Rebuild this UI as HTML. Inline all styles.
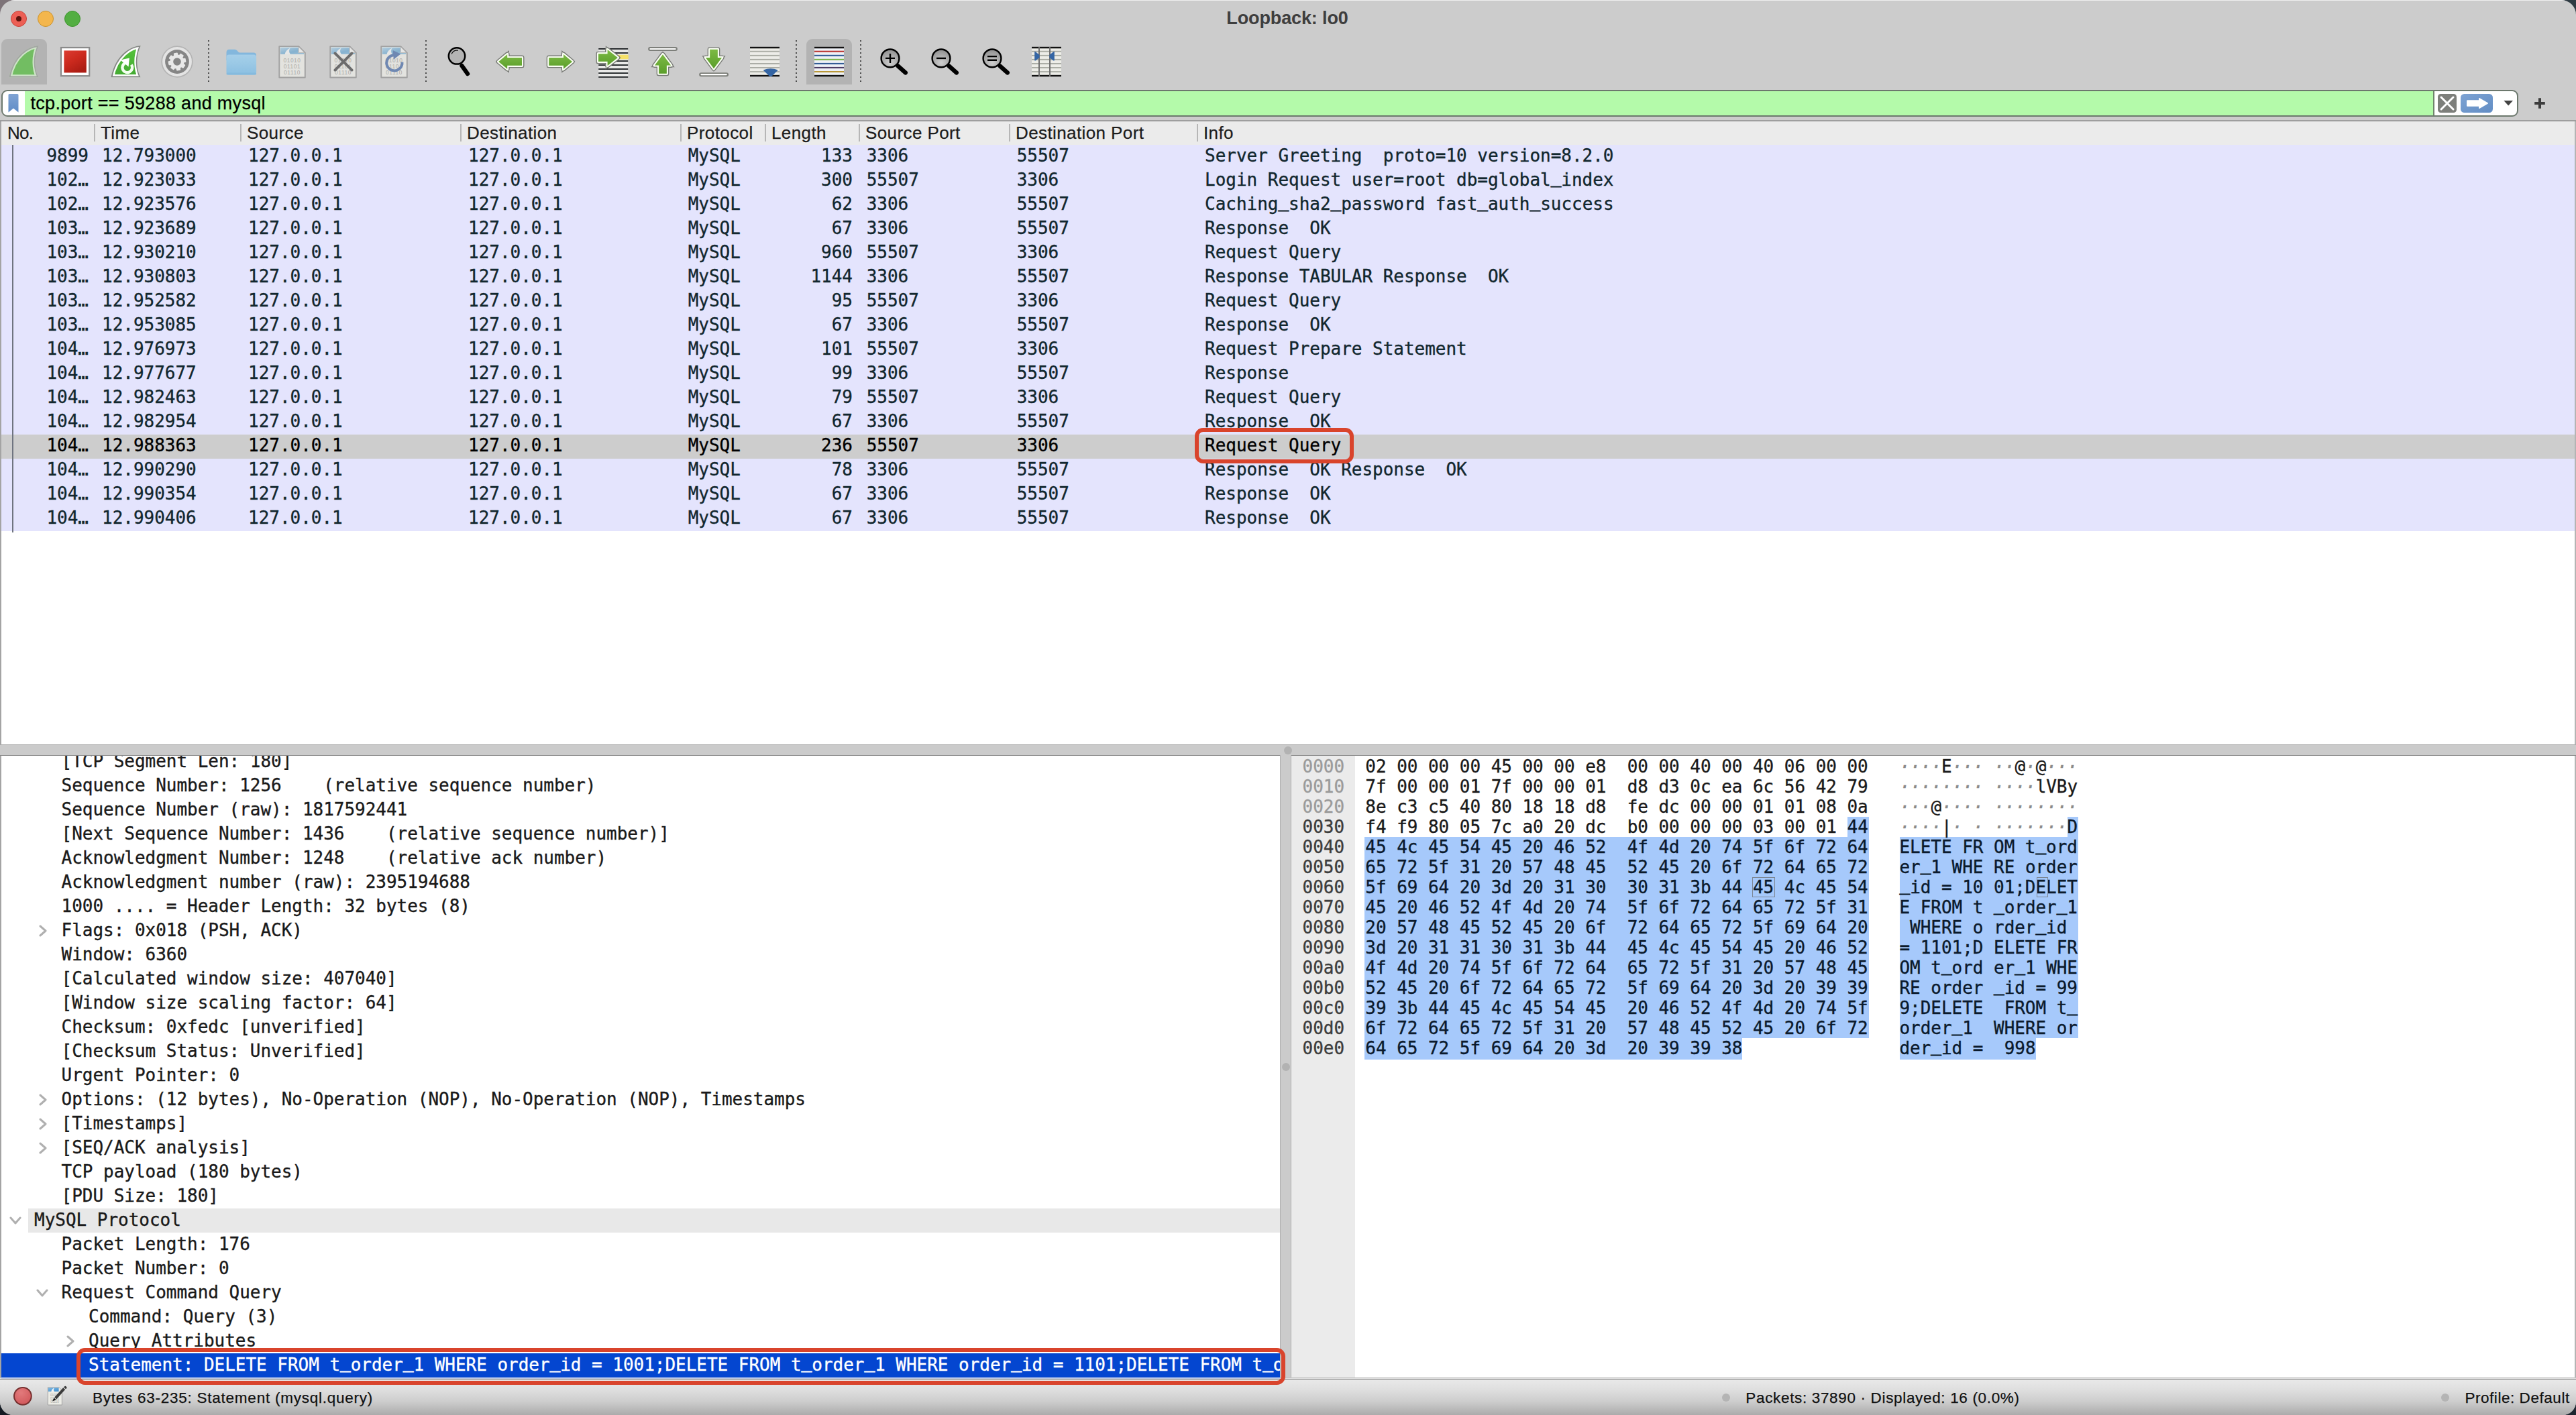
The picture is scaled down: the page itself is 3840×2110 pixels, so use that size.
<!DOCTYPE html><html lang="en"><head><meta charset="utf-8"><title>Loopback: lo0</title><style>
*{box-sizing:border-box;margin:0;padding:0}
html,body{width:3840px;height:2110px;overflow:hidden}
body{background:#2e3a42;font-family:"Liberation Sans",sans-serif;position:relative}
#dl{position:absolute;left:0;top:0;width:60px;height:60px;background:#7d7378}
#dbl{position:absolute;left:0;top:2050px;width:60px;height:60px;background:#141a22}
#dbr{position:absolute;left:3780px;top:2050px;width:60px;height:60px;background:#1e2630}
#win{position:absolute;left:0;top:0;width:3840px;height:2110px;background:#cccccc;border-radius:22px 22px 20px 20px;overflow:hidden}
#topline{position:absolute;left:0;top:0;width:3840px;height:1.3px;background:#efefef}
.abs{position:absolute}
#title{position:absolute;left:-1px;width:3840px;top:10px;height:34px;line-height:34px;text-align:center;font-weight:bold;font-size:27px;letter-spacing:-0.13px;color:#3e3e3e}
.tl{position:absolute;top:16px;width:24px;height:24px;border-radius:50%}
.tbb{position:absolute;top:58px;width:68px;height:67.6px;border-radius:9px 9px 0 0;background:#b3b3b3}
.sep{position:absolute;top:60px;width:2px;height:62px;background:repeating-linear-gradient(to bottom,#4a4a4a 0,#4a4a4a 2px,transparent 2px,transparent 6px)}
#filter{position:absolute;left:2px;top:134px;width:3752px;height:40px;border:2px solid #6c786d;border-radius:9px;background:#fff;overflow:hidden}
#fgreen{position:absolute;left:33px;top:0;width:3590px;height:36px;background:#b4faaa}
#ftext{position:absolute;left:41.5px;top:0;height:36px;line-height:37px;font-size:27px;letter-spacing:0.3px;color:#000;white-space:pre}
#hdr{position:absolute;left:2px;top:181px;width:3836px;height:35px;background:#ebebeb}
.hc,.st,#ftext{-webkit-text-stroke:0.25px currentColor}
.hc{position:absolute;top:0;height:35px;line-height:34px;font-size:26px;letter-spacing:0.4px;color:#1c1c1c;white-space:pre}
.hs{position:absolute;top:4px;width:2px;height:26px;background:#b6b6b6}
#plist{position:absolute;left:2px;top:216px;width:3836px;height:894px;background:#fff;overflow:hidden}
.pr,.dr,.hx{-webkit-text-stroke:0.35px currentColor}
.pr{letter-spacing:-0.028px;position:absolute;left:0;width:3836px;height:36px;background:#e4e4fd;font-family:"DejaVu Sans Mono","Liberation Mono",monospace;font-size:26px;line-height:36px;color:#12272e;white-space:pre}
.pr.sel{background:#cdcdcd;color:#000}
.pr span{position:absolute;top:-2.3px;height:36px}
.r{text-align:right}
#det{position:absolute;left:2px;top:1127px;width:1906px;height:928px;background:#fff;overflow:hidden}
.dr{letter-spacing:-0.028px;position:absolute;left:0;width:1906px;height:36px;font-family:"DejaVu Sans Mono","Liberation Mono",monospace;font-size:26px;line-height:36px;color:#1a1a1a;white-space:pre}
.dr span{position:absolute;top:-1px}
.dr.sel{background:#0446d0;color:#fff}
.chev{position:absolute}
u{text-decoration:none;position:relative;top:-3.6px;-webkit-text-stroke:0.9px currentColor}
#hex{position:absolute;left:1925px;top:1127px;width:1913px;height:928px;background:#fff;overflow:hidden}
#hexoff{position:absolute;left:0;top:0;width:95px;height:928px;background:#ebebeb}
.hx{position:absolute;height:30px;line-height:30px;font-family:"DejaVu Sans Mono","Liberation Mono",monospace;font-size:26px;color:#1a1a1a;white-space:pre}
.hx span{position:relative;top:-0.5px;letter-spacing:-0.04px}
.hl{position:absolute;background:#a6c9fb}
.dot{color:#8a8a8a}
#status{position:absolute;left:0;top:2057px;width:3840px;height:53px;background:linear-gradient(to bottom,#e9e9e9 0,#dedede 30%,#cdcdcd 62%,#ababab 100%)}
.st{position:absolute;top:0;height:53px;line-height:55px;font-size:22.5px;letter-spacing:0.75px;color:#111;white-space:pre}
.ann{position:absolute;border:6px solid #d9442c;border-radius:12.5px}
</style></head><body>
<div id="dl"></div><div id="dbl"></div><div id="dbr"></div>
<div id="win">
<div id="topline"></div>
<div class="tl" style="left:16px;background:#ec5f55;border:1px solid #c9443b"></div>
<div class="abs" style="left:24px;top:24px;width:8px;height:8px;border-radius:50%;background:#5c140d"></div>
<div class="tl" style="left:56px;background:#f3b64d;border:1px solid #c9922f"></div>
<div class="tl" style="left:96px;background:#53ae42;border:1px solid #3f9430"></div>
<div id="title">Loopback: lo0</div>
<div class="tbb" style="left:2px"></div>
<div class="tbb" style="left:1202px"></div>
<div class="sep" style="left:310px"></div>
<div class="sep" style="left:634px"></div>
<div class="sep" style="left:1186px"></div>
<div class="sep" style="left:1282px"></div>
<svg class="abs" style="left:0;top:56px" width="1600" height="72" viewBox="0 56 1600 72"><defs><linearGradient id="ggreen" x1="0" y1="0" x2="0" y2="1"><stop offset="0" stop-color="#7dba45"/><stop offset="1" stop-color="#5a9e2a"/></linearGradient><linearGradient id="gred" x1="0" y1="0" x2="0.6" y2="1"><stop offset="0" stop-color="#dc3c32"/><stop offset="0.5" stop-color="#cc2a1e"/><stop offset="1" stop-color="#ac1d14"/></linearGradient><linearGradient id="gband" x1="0" y1="0" x2="1" y2="1"><stop offset="0" stop-color="#a8cfe8"/><stop offset="0.6" stop-color="#62a5d2"/><stop offset="1" stop-color="#7db6dc"/></linearGradient><linearGradient id="gfold" x1="0" y1="0" x2="0" y2="1"><stop offset="0" stop-color="#a3d0ec"/><stop offset="1" stop-color="#86bfe4"/></linearGradient><radialGradient id="gmag" cx="0.5" cy="0.75" r="0.8"><stop offset="0" stop-color="#cfcfcf"/><stop offset="1" stop-color="#8a8a8a"/></radialGradient><linearGradient id="gfin2" x1="0" y1="0" x2="0" y2="1"><stop offset="0" stop-color="#55c43c"/><stop offset="1" stop-color="#43a832"/></linearGradient></defs><clipPath id="finclip1"><path d="M57.90 68.10 C43.00 68.50,20.00 82.00,13.50 115.30 L57.60 115.30 C51.50 104.00,50.00 84.00,57.90 68.10 Z"/></clipPath><g clip-path="url(#finclip1)"><path d="M57.90 68.10 C43.00 68.50,20.00 82.00,13.50 115.30 L57.60 115.30 C51.50 104.00,50.00 84.00,57.90 68.10 Z" fill="#72bd62"/><path d="M57.90 68.10 C43.00 68.50,20.00 82.00,13.50 115.30 L57.60 115.30 C51.50 104.00,50.00 84.00,57.90 68.10 Z" fill="none" stroke="#cde4c7" stroke-width="8.0"/><path d="M57.90 68.10 C43.00 68.50,20.00 82.00,13.50 115.30 L57.60 115.30 C51.50 104.00,50.00 84.00,57.90 68.10 Z" fill="none" stroke="#a3a4a3" stroke-width="3.6"/></g><rect x="91" y="71" width="42.2" height="42.2" fill="#fff" stroke="#8a8a8a" stroke-width="2.2"/><rect x="95.4" y="75.4" width="33.4" height="33" fill="url(#gred)"/><clipPath id="finclip2"><path d="M209.90 68.10 C195.00 68.50,172.00 82.00,165.50 115.30 L209.60 115.30 C203.50 104.00,202.00 84.00,209.90 68.10 Z"/></clipPath><g clip-path="url(#finclip2)"><path d="M209.90 68.10 C195.00 68.50,172.00 82.00,165.50 115.30 L209.60 115.30 C203.50 104.00,202.00 84.00,209.90 68.10 Z" fill="url(#gfin2)"/><path d="M209.90 68.10 C195.00 68.50,172.00 82.00,165.50 115.30 L209.60 115.30 C203.50 104.00,202.00 84.00,209.90 68.10 Z" fill="none" stroke="#ffffff" stroke-width="8.4"/><path d="M209.90 68.10 C195.00 68.50,172.00 82.00,165.50 115.30 L209.60 115.30 C203.50 104.00,202.00 84.00,209.90 68.10 Z" fill="none" stroke="#858685" stroke-width="3.4"/></g><path d="M195.86 96.46 A7.4 7.4 0 1 1 187.27 93.74" fill="none" stroke="#f4fff0" stroke-width="4.4"/><path d="M179.4 89.4 L192.9 86.6 L191.6 99.6 Z" fill="#fff"/><circle cx="264" cy="92" r="22.8" fill="#e4e4e4" stroke="#b4b4b4" stroke-width="1.7"/><circle cx="264" cy="92" r="17.9" fill="#858585"/><path d="M259.87 80.31 L263.88 79.60 L264.66 82.42 L267.45 83.04 L269.35 80.81 L272.68 83.15 L271.24 85.70 L272.77 88.10 L275.69 87.87 L276.40 91.88 L273.58 92.66 L272.96 95.45 L275.19 97.35 L272.85 100.68 L270.30 99.24 L267.90 100.77 L268.13 103.69 L264.12 104.40 L263.34 101.58 L260.55 100.96 L258.65 103.19 L255.32 100.85 L256.76 98.30 L255.23 95.90 L252.31 96.13 L251.60 92.12 L254.42 91.34 L255.04 88.55 L252.81 86.65 L255.15 83.32 L257.70 84.76 L260.10 83.23 Z M257.2 92 a6.8 6.8 0 1 0 13.6 0 a6.8 6.8 0 1 0 -13.6 0 Z" fill="#e8e8e8" fill-rule="evenodd" stroke="#e8e8e8" stroke-width="2" stroke-linejoin="round"/><g opacity="0.92"><path d="M337.5 78.5 Q337.5 73.8 341.5 73.8 L350 73.8 Q352 73.8 353.6 75.6 L355 77.2 Q356.2 78.4 358 78.4 L378 78.4 Q382 78.4 382 82.4 L382 90 L337.5 90 Z" fill="#7db6df"/><rect x="337.5" y="81.6" width="44.6" height="30" rx="4" fill="url(#gfold)"/><rect x="337.5" y="108.6" width="44.6" height="3" rx="1.5" fill="#7fb9e0"/></g><g opacity="0.66"><path d="M416.3 69.1 H445.3 L454.8 78.6 V115.5 H416.3 Z" fill="#efefe9" stroke="#8c8c8c" stroke-width="1.9" stroke-linejoin="round"/><path d="M417.90000000000003 70.69999999999999 H444.7 V79.0 H453.2 V80.69999999999999 H417.90000000000003 Z" fill="url(#gband)"/><path d="M445.3 69.89999999999999 V78.6 H454.0 Z" fill="#f6f6f4" stroke="#9a9a9a" stroke-width="0.8"/><path d="M433.3 71.3 C427.8 73.6,425.1 77.6,424.7 81.1 L433.3 81.1 C430.3 78.1,430.3 74.1,433.3 71.3 Z" fill="#f4f6f6"/><text x="435.5" y="93.0" font-family="Liberation Sans,sans-serif" font-size="8.4" letter-spacing="0.55" text-anchor="middle" fill="#9a9a96">01010</text><text x="435.5" y="101.9" font-family="Liberation Sans,sans-serif" font-size="8.4" letter-spacing="0.55" text-anchor="middle" fill="#9a9a96">01101</text><text x="435.5" y="110.8" font-family="Liberation Sans,sans-serif" font-size="8.4" letter-spacing="0.55" text-anchor="middle" fill="#9a9a96">01110</text></g><g opacity="0.66"><path d="M492.3 69.1 H521.3 L530.8 78.6 V115.5 H492.3 Z" fill="#efefe9" stroke="#8c8c8c" stroke-width="1.9" stroke-linejoin="round"/><path d="M493.90000000000003 70.69999999999999 H520.6999999999999 V79.0 H529.1999999999999 V80.69999999999999 H493.90000000000003 Z" fill="url(#gband)"/><path d="M521.3 69.89999999999999 V78.6 H530.0 Z" fill="#f6f6f4" stroke="#9a9a9a" stroke-width="0.8"/><path d="M509.3 71.3 C503.8 73.6,501.1 77.6,500.7 81.1 L509.3 81.1 C506.3 78.1,506.3 74.1,509.3 71.3 Z" fill="#f4f6f6"/><text x="511.5" y="93.0" font-family="Liberation Sans,sans-serif" font-size="8.4" letter-spacing="0.55" text-anchor="middle" fill="#9a9a96">01010</text><text x="511.5" y="101.9" font-family="Liberation Sans,sans-serif" font-size="8.4" letter-spacing="0.55" text-anchor="middle" fill="#9a9a96">01101</text><text x="511.5" y="110.8" font-family="Liberation Sans,sans-serif" font-size="8.4" letter-spacing="0.55" text-anchor="middle" fill="#9a9a96">01110</text></g><path d="M499.5 79.5 L524.5 104.5 M524.5 79.5 L499.5 104.5" stroke="#6c6c6c" stroke-width="4" stroke-linecap="round"/><g opacity="0.66"><path d="M568.3 69.1 H597.3 L606.8 78.6 V115.5 H568.3 Z" fill="#efefe9" stroke="#8c8c8c" stroke-width="1.9" stroke-linejoin="round"/><path d="M569.9 70.69999999999999 H596.6999999999999 V79.0 H605.1999999999999 V80.69999999999999 H569.9 Z" fill="url(#gband)"/><path d="M597.3 69.89999999999999 V78.6 H606.0 Z" fill="#f6f6f4" stroke="#9a9a9a" stroke-width="0.8"/><path d="M585.3 71.3 C579.8 73.6,577.0999999999999 77.6,576.6999999999999 81.1 L585.3 81.1 C582.3 78.1,582.3 74.1,585.3 71.3 Z" fill="#f4f6f6"/><text x="587.5" y="93.0" font-family="Liberation Sans,sans-serif" font-size="8.4" letter-spacing="0.55" text-anchor="middle" fill="#9a9a96">01010</text><text x="587.5" y="101.9" font-family="Liberation Sans,sans-serif" font-size="8.4" letter-spacing="0.55" text-anchor="middle" fill="#9a9a96">01101</text><text x="587.5" y="110.8" font-family="Liberation Sans,sans-serif" font-size="8.4" letter-spacing="0.55" text-anchor="middle" fill="#9a9a96">01110</text></g><path d="M592.6 83.2 A11.6 11.6 0 1 0 599.4 92.6" fill="none" stroke="#6f88b2" stroke-width="4"/><path d="M585.6 75 L597.4 80.4 L586.8 88.6 Z" fill="#6f88b2"/><path d="M688.5 98 L697 110" stroke="#000" stroke-width="6.4" stroke-linecap="round"/><circle cx="681" cy="83.4" r="12.2" fill="#b4b4b4" stroke="#000" stroke-width="2.5"/><path d="M673.4 80 A8.6 8.6 0 0 1 682.4 75.2" fill="none" stroke="#111" stroke-width="1.3" stroke-linecap="round"/><path d="M778.00 86.00 L756.20 86.00 L756.20 81.05 L743.20 91.90 L756.20 102.75 L756.20 97.80 L778.00 97.80 Z" fill="#777975" stroke="#777975" stroke-width="5.6" stroke-linejoin="miter" stroke-miterlimit="3"/><path d="M778.00 86.00 L756.20 86.00 L756.20 81.05 L743.20 91.90 L756.20 102.75 L756.20 97.80 L778.00 97.80 Z" fill="#777975" stroke="#777975" stroke-width="7" stroke-linejoin="round"/><path d="M778.00 86.00 L756.20 86.00 L756.20 81.05 L743.20 91.90 L756.20 102.75 L756.20 97.80 L778.00 97.80 Z" fill="#fff" stroke="#fbfff4" stroke-width="3.2" stroke-linejoin="miter" stroke-miterlimit="3"/><path d="M778.00 86.00 L756.20 86.00 L756.20 81.05 L743.20 91.90 L756.20 102.75 L756.20 97.80 L778.00 97.80 Z" fill="#fff" stroke="#fbfff4" stroke-width="4.2" stroke-linejoin="round"/><path d="M778.00 86.00 L756.20 86.00 L756.20 81.05 L743.20 91.90 L756.20 102.75 L756.20 97.80 L778.00 97.80 Z" fill="url(#ggreen)"/><path d="M818.20 86.00 L840.00 86.00 L840.00 81.05 L853.00 91.90 L840.00 102.75 L840.00 97.80 L818.20 97.80 Z" fill="#777975" stroke="#777975" stroke-width="5.6" stroke-linejoin="miter" stroke-miterlimit="3"/><path d="M818.20 86.00 L840.00 86.00 L840.00 81.05 L853.00 91.90 L840.00 102.75 L840.00 97.80 L818.20 97.80 Z" fill="#777975" stroke="#777975" stroke-width="7" stroke-linejoin="round"/><path d="M818.20 86.00 L840.00 86.00 L840.00 81.05 L853.00 91.90 L840.00 102.75 L840.00 97.80 L818.20 97.80 Z" fill="#fff" stroke="#fbfff4" stroke-width="3.2" stroke-linejoin="miter" stroke-miterlimit="3"/><path d="M818.20 86.00 L840.00 86.00 L840.00 81.05 L853.00 91.90 L840.00 102.75 L840.00 97.80 L818.20 97.80 Z" fill="#fff" stroke="#fbfff4" stroke-width="4.2" stroke-linejoin="round"/><path d="M818.20 86.00 L840.00 86.00 L840.00 81.05 L853.00 91.90 L840.00 102.75 L840.00 97.80 L818.20 97.80 Z" fill="url(#ggreen)"/><rect x="892.2" y="72.2" width="44" height="43.4" fill="#e9e9e8"/><rect x="892.2" y="72.05" width="44.0" height="1.7" fill="#0e1214"/><rect x="892.2" y="78.15" width="44.0" height="1.7" fill="#0e1214"/><rect x="892.2" y="84.15" width="44.0" height="1.7" fill="#0e1214"/><rect x="892.2" y="90.15" width="44.0" height="1.7" fill="#0e1214"/><rect x="892.2" y="96.15" width="44.0" height="1.7" fill="#0e1214"/><rect x="892.2" y="102.15" width="44.0" height="1.7" fill="#0e1214"/><rect x="892.2" y="108.15" width="44.0" height="1.7" fill="#0e1214"/><rect x="892.2" y="114.05" width="44.0" height="1.7" fill="#0e1214"/><rect x="915" y="81.7" width="21.8" height="6.6" fill="#f6e168"/><path d="M892.00 80.15 L905.60 80.15 L905.60 74.10 L920.80 86.00 L905.60 97.90 L905.60 91.85 L892.00 91.85 Z" fill="#777975" stroke="#777975" stroke-width="5.6" stroke-linejoin="miter" stroke-miterlimit="3"/><path d="M892.00 80.15 L905.60 80.15 L905.60 74.10 L920.80 86.00 L905.60 97.90 L905.60 91.85 L892.00 91.85 Z" fill="#777975" stroke="#777975" stroke-width="7" stroke-linejoin="round"/><path d="M892.00 80.15 L905.60 80.15 L905.60 74.10 L920.80 86.00 L905.60 97.90 L905.60 91.85 L892.00 91.85 Z" fill="#fff" stroke="#fbfff4" stroke-width="3.2" stroke-linejoin="miter" stroke-miterlimit="3"/><path d="M892.00 80.15 L905.60 80.15 L905.60 74.10 L920.80 86.00 L905.60 97.90 L905.60 91.85 L892.00 91.85 Z" fill="#fff" stroke="#fbfff4" stroke-width="4.2" stroke-linejoin="round"/><path d="M892.00 80.15 L905.60 80.15 L905.60 74.10 L920.80 86.00 L905.60 97.90 L905.60 91.85 L892.00 91.85 Z" fill="url(#ggreen)"/><rect x="966.1" y="70" width="43.8" height="6" rx="3" fill="#7d7f7a"/><rect x="968.3" y="71.9" width="39.4" height="2.2" rx="1.1" fill="#fff"/><path d="M982.15 109.70 L993.85 109.70 L993.85 97.50 L1000.10 97.50 L988.00 81.20 L975.90 97.50 L982.15 97.50 Z" fill="#777975" stroke="#777975" stroke-width="5.6" stroke-linejoin="miter" stroke-miterlimit="3"/><path d="M982.15 109.70 L993.85 109.70 L993.85 97.50 L1000.10 97.50 L988.00 81.20 L975.90 97.50 L982.15 97.50 Z" fill="#777975" stroke="#777975" stroke-width="7" stroke-linejoin="round"/><path d="M982.15 109.70 L993.85 109.70 L993.85 97.50 L1000.10 97.50 L988.00 81.20 L975.90 97.50 L982.15 97.50 Z" fill="#fff" stroke="#fbfff4" stroke-width="3.2" stroke-linejoin="miter" stroke-miterlimit="3"/><path d="M982.15 109.70 L993.85 109.70 L993.85 97.50 L1000.10 97.50 L988.00 81.20 L975.90 97.50 L982.15 97.50 Z" fill="#fff" stroke="#fbfff4" stroke-width="4.2" stroke-linejoin="round"/><path d="M982.15 109.70 L993.85 109.70 L993.85 97.50 L1000.10 97.50 L988.00 81.20 L975.90 97.50 L982.15 97.50 Z" fill="url(#ggreen)"/><path d="M1058.15 73.70 L1069.85 73.70 L1069.85 85.90 L1076.10 85.90 L1064.00 102.20 L1051.90 85.90 L1058.15 85.90 Z" fill="#777975" stroke="#777975" stroke-width="5.6" stroke-linejoin="miter" stroke-miterlimit="3"/><path d="M1058.15 73.70 L1069.85 73.70 L1069.85 85.90 L1076.10 85.90 L1064.00 102.20 L1051.90 85.90 L1058.15 85.90 Z" fill="#777975" stroke="#777975" stroke-width="7" stroke-linejoin="round"/><path d="M1058.15 73.70 L1069.85 73.70 L1069.85 85.90 L1076.10 85.90 L1064.00 102.20 L1051.90 85.90 L1058.15 85.90 Z" fill="#fff" stroke="#fbfff4" stroke-width="3.2" stroke-linejoin="miter" stroke-miterlimit="3"/><path d="M1058.15 73.70 L1069.85 73.70 L1069.85 85.90 L1076.10 85.90 L1064.00 102.20 L1051.90 85.90 L1058.15 85.90 Z" fill="#fff" stroke="#fbfff4" stroke-width="4.2" stroke-linejoin="round"/><path d="M1058.15 73.70 L1069.85 73.70 L1069.85 85.90 L1076.10 85.90 L1064.00 102.20 L1051.90 85.90 L1058.15 85.90 Z" fill="url(#ggreen)"/><rect x="1042.2" y="108.2" width="43.8" height="6" rx="3" fill="#7d7f7a"/><rect x="1044.4" y="110.1" width="39.4" height="2.2" rx="1.1" fill="#fff"/><rect x="1118" y="70" width="44" height="44" fill="#edede8"/><rect x="1118" y="75.80" width="44" height="1.8" fill="#a9aba3"/><rect x="1118" y="81.90" width="44" height="1.8" fill="#a9aba3"/><rect x="1118" y="87.90" width="44" height="1.8" fill="#a9aba3"/><rect x="1118" y="94.00" width="44" height="1.8" fill="#a9aba3"/><rect x="1118" y="100.00" width="44" height="1.8" fill="#a9aba3"/><rect x="1118" y="106.10" width="44" height="1.8" fill="#a9aba3"/><rect x="1118" y="69.80" width="44" height="2.4" fill="#111"/><rect x="1118" y="111.80" width="44" height="2.4" fill="#111"/><path d="M1137.6 104.6 Q1148.7 100 1159.8 104.6 L1150.6 113.6 Q1148.7 114.6 1146.8 113.6 Z" fill="#3465a4"/><rect x="1214" y="70" width="44" height="44" fill="#eef1f6"/><rect x="1214" y="69.80" width="44" height="2.4" fill="#111"/><rect x="1214" y="111.80" width="44" height="2.4" fill="#111"/><rect x="1214" y="75.70" width="44" height="2.0" fill="#b9302c"/><rect x="1214" y="81.80" width="44" height="2.0" fill="#2f5a94"/><rect x="1214" y="87.80" width="44" height="2.0" fill="#7ab446"/><rect x="1214" y="93.90" width="44" height="2.0" fill="#2f5a94"/><rect x="1214" y="99.90" width="44" height="2.0" fill="#4a3a62"/><rect x="1214" y="106.00" width="44" height="2.0" fill="#b99838"/><path d="M1338.6 98.4 L1349.8 108.4" stroke="#000" stroke-width="6.4" stroke-linecap="round"/><circle cx="1327" cy="86.9" r="13.4" fill="url(#gmag)" stroke="#000" stroke-width="2.4"/><path d="M1320 86.9 H1334 M1327 79.9 V93.9" stroke="#000" stroke-width="2.4"/><path d="M1414.6 98.4 L1425.8 108.4" stroke="#000" stroke-width="6.4" stroke-linecap="round"/><circle cx="1403" cy="86.9" r="13.4" fill="url(#gmag)" stroke="#000" stroke-width="2.4"/><path d="M1396 86.9 H1410" stroke="#000" stroke-width="2.4"/><path d="M1490.6 98.4 L1501.8 108.4" stroke="#000" stroke-width="6.4" stroke-linecap="round"/><circle cx="1479" cy="86.9" r="13.4" fill="url(#gmag)" stroke="#000" stroke-width="2.4"/><path d="M1472 84.10000000000001 H1486 M1472 89.7 H1486" stroke="#000" stroke-width="2.4"/><rect x="1538" y="70" width="44" height="44" fill="#edede8"/><rect x="1538" y="75.80" width="44" height="1.8" fill="#a9aba3"/><rect x="1538" y="81.90" width="44" height="1.8" fill="#a9aba3"/><rect x="1538" y="87.90" width="44" height="1.8" fill="#a9aba3"/><rect x="1538" y="94.00" width="44" height="1.8" fill="#a9aba3"/><rect x="1538" y="100.00" width="44" height="1.8" fill="#a9aba3"/><rect x="1538" y="106.10" width="44" height="1.8" fill="#a9aba3"/><rect x="1538" y="69.80" width="44" height="2.4" fill="#111"/><rect x="1538" y="111.80" width="44" height="2.4" fill="#111"/><rect x="1548" y="70" width="2" height="44" fill="#6f6f6f"/><rect x="1564" y="70" width="2" height="44" fill="#6f6f6f"/><path d="M1542.2 77.6 Q1542.2 76.4 1543.4 77 L1549.6 82 L1549.6 86 L1543.4 90.4 Q1542.2 91 1542.2 89.8 Z" fill="#3465a4"/><path d="M1571.8 77.6 Q1571.8 76.4 1570.6 77 L1564.4 82 L1564.4 86 L1570.6 90.4 Q1571.8 91 1571.8 89.8 Z" fill="#3465a4"/></svg>
<div id="filter"><div id="fgreen"></div>
<svg class="abs" style="left:7px;top:3px" width="18" height="30" viewBox="0 0 18 30"><defs><linearGradient id="bk" x1="0" y1="0" x2="0" y2="1"><stop offset="0" stop-color="#7fa3d3"/><stop offset="1" stop-color="#5f8cc7"/></linearGradient></defs><path d="M1.5 2.5 Q1.5 1 3 1 L15 1 Q16.5 1 16.5 2.5 L16.5 28.5 L9 22.5 L1.5 28.5 Z" fill="url(#bk)"/></svg>
<div id="ftext">tcp.port == 59288 and mysql</div>
<div class="abs" style="left:3623px;top:0;width:1.5px;height:36px;background:#6f846c"></div>
<svg class="abs" style="left:3629px;top:4px" width="30" height="28" viewBox="0 0 30 28"><rect x="1" y="0" width="28" height="28" rx="4.5" fill="#7d7f7b"/><path d="M6 5 L24 23 M24 5 L6 23" stroke="#fff" stroke-width="3" stroke-linecap="round" fill="none"/></svg>
<svg class="abs" style="left:3664px;top:4px" width="48" height="28" viewBox="0 0 48 28"><rect x="0" y="0" width="48" height="28" rx="5.5" fill="url(#gapply)"/><defs><linearGradient id="gapply" x1="0" y1="0" x2="1" y2="1"><stop offset="0" stop-color="#7da3d3"/><stop offset="1" stop-color="#628dc4"/></linearGradient></defs><path d="M10 10.2 L28 10.2 L28 7 L40 14 L28 21 L28 17.8 L10 17.8 Z" fill="#fff" stroke="#fff" stroke-width="2" stroke-linejoin="round"/></svg>
<svg class="abs" style="left:3727px;top:13px" width="16" height="9" viewBox="0 0 16 9"><path d="M1.4 1 L15 1 L8.2 8.4 Z" fill="#434343"/></svg>
</div>
<svg class="abs" style="left:3776px;top:144px" width="20" height="20" viewBox="0 0 20 20"><path d="M10 2.2 V17.8 M2.2 10 H17.8" stroke="#3c3c3c" stroke-width="4" fill="none"/></svg>
<div class="abs" style="left:0;top:179px;width:3840px;height:2px;background:linear-gradient(#a6a6a6,#8e8e8e)"></div>
<div class="abs" style="left:0;top:181px;width:2px;height:929px;background:#a4a4a4"></div>
<div class="abs" style="left:3838px;top:181px;width:2px;height:929px;background:#b4b4b4"></div>
<div id="hdr">
<div class="hc" style="left:9px;letter-spacing:-0.8px">No.</div>
<div class="hs" style="left:138px"></div>
<div class="hc" style="left:148px">Time</div>
<div class="hs" style="left:356px"></div>
<div class="hc" style="left:366px">Source</div>
<div class="hs" style="left:684px"></div>
<div class="hc" style="left:694px">Destination</div>
<div class="hs" style="left:1012px"></div>
<div class="hc" style="left:1022px">Protocol</div>
<div class="hs" style="left:1138px"></div>
<div class="hc" style="left:1148px">Length</div>
<div class="hs" style="left:1278px"></div>
<div class="hc" style="left:1288px">Source Port</div>
<div class="hs" style="left:1502px"></div>
<div class="hc" style="left:1512px">Destination Port</div>
<div class="hs" style="left:1782px"></div>
<div class="hc" style="left:1792px">Info</div>
</div>
<div id="plist">
<div class="pr" style="top:0px"><span class="r" style="left:30px;width:100px">9899</span><span style="left:150px">12.793000</span><span style="left:368px">127.0.0.1</span><span style="left:696px">127.0.0.1</span><span style="left:1023.7px">MySQL</span><span class="r" style="left:1150px;width:119px">133</span><span style="left:1289.7px">3306</span><span style="left:1513.7px">55507</span><span style="left:1794px">Server Greeting  proto=10 version=8.2.0</span></div>
<div class="pr" style="top:36px"><span class="r" style="left:30px;width:100px">102…</span><span style="left:150px">12.923033</span><span style="left:368px">127.0.0.1</span><span style="left:696px">127.0.0.1</span><span style="left:1023.7px">MySQL</span><span class="r" style="left:1150px;width:119px">300</span><span style="left:1289.7px">55507</span><span style="left:1513.7px">3306</span><span style="left:1794px">Login Request user=root db=global<u>_</u>index</span></div>
<div class="pr" style="top:72px"><span class="r" style="left:30px;width:100px">102…</span><span style="left:150px">12.923576</span><span style="left:368px">127.0.0.1</span><span style="left:696px">127.0.0.1</span><span style="left:1023.7px">MySQL</span><span class="r" style="left:1150px;width:119px">62</span><span style="left:1289.7px">3306</span><span style="left:1513.7px">55507</span><span style="left:1794px">Caching<u>_</u>sha2<u>_</u>password fast<u>_</u>auth<u>_</u>success</span></div>
<div class="pr" style="top:108px"><span class="r" style="left:30px;width:100px">103…</span><span style="left:150px">12.923689</span><span style="left:368px">127.0.0.1</span><span style="left:696px">127.0.0.1</span><span style="left:1023.7px">MySQL</span><span class="r" style="left:1150px;width:119px">67</span><span style="left:1289.7px">3306</span><span style="left:1513.7px">55507</span><span style="left:1794px">Response  OK</span></div>
<div class="pr" style="top:144px"><span class="r" style="left:30px;width:100px">103…</span><span style="left:150px">12.930210</span><span style="left:368px">127.0.0.1</span><span style="left:696px">127.0.0.1</span><span style="left:1023.7px">MySQL</span><span class="r" style="left:1150px;width:119px">960</span><span style="left:1289.7px">55507</span><span style="left:1513.7px">3306</span><span style="left:1794px">Request Query</span></div>
<div class="pr" style="top:180px"><span class="r" style="left:30px;width:100px">103…</span><span style="left:150px">12.930803</span><span style="left:368px">127.0.0.1</span><span style="left:696px">127.0.0.1</span><span style="left:1023.7px">MySQL</span><span class="r" style="left:1150px;width:119px">1144</span><span style="left:1289.7px">3306</span><span style="left:1513.7px">55507</span><span style="left:1794px">Response TABULAR Response  OK</span></div>
<div class="pr" style="top:216px"><span class="r" style="left:30px;width:100px">103…</span><span style="left:150px">12.952582</span><span style="left:368px">127.0.0.1</span><span style="left:696px">127.0.0.1</span><span style="left:1023.7px">MySQL</span><span class="r" style="left:1150px;width:119px">95</span><span style="left:1289.7px">55507</span><span style="left:1513.7px">3306</span><span style="left:1794px">Request Query</span></div>
<div class="pr" style="top:252px"><span class="r" style="left:30px;width:100px">103…</span><span style="left:150px">12.953085</span><span style="left:368px">127.0.0.1</span><span style="left:696px">127.0.0.1</span><span style="left:1023.7px">MySQL</span><span class="r" style="left:1150px;width:119px">67</span><span style="left:1289.7px">3306</span><span style="left:1513.7px">55507</span><span style="left:1794px">Response  OK</span></div>
<div class="pr" style="top:288px"><span class="r" style="left:30px;width:100px">104…</span><span style="left:150px">12.976973</span><span style="left:368px">127.0.0.1</span><span style="left:696px">127.0.0.1</span><span style="left:1023.7px">MySQL</span><span class="r" style="left:1150px;width:119px">101</span><span style="left:1289.7px">55507</span><span style="left:1513.7px">3306</span><span style="left:1794px">Request Prepare Statement</span></div>
<div class="pr" style="top:324px"><span class="r" style="left:30px;width:100px">104…</span><span style="left:150px">12.977677</span><span style="left:368px">127.0.0.1</span><span style="left:696px">127.0.0.1</span><span style="left:1023.7px">MySQL</span><span class="r" style="left:1150px;width:119px">99</span><span style="left:1289.7px">3306</span><span style="left:1513.7px">55507</span><span style="left:1794px">Response</span></div>
<div class="pr" style="top:360px"><span class="r" style="left:30px;width:100px">104…</span><span style="left:150px">12.982463</span><span style="left:368px">127.0.0.1</span><span style="left:696px">127.0.0.1</span><span style="left:1023.7px">MySQL</span><span class="r" style="left:1150px;width:119px">79</span><span style="left:1289.7px">55507</span><span style="left:1513.7px">3306</span><span style="left:1794px">Request Query</span></div>
<div class="pr" style="top:396px"><span class="r" style="left:30px;width:100px">104…</span><span style="left:150px">12.982954</span><span style="left:368px">127.0.0.1</span><span style="left:696px">127.0.0.1</span><span style="left:1023.7px">MySQL</span><span class="r" style="left:1150px;width:119px">67</span><span style="left:1289.7px">3306</span><span style="left:1513.7px">55507</span><span style="left:1794px">Response  OK</span></div>
<div class="pr sel" style="top:432px"><span class="r" style="left:30px;width:100px">104…</span><span style="left:150px">12.988363</span><span style="left:368px">127.0.0.1</span><span style="left:696px">127.0.0.1</span><span style="left:1023.7px">MySQL</span><span class="r" style="left:1150px;width:119px">236</span><span style="left:1289.7px">55507</span><span style="left:1513.7px">3306</span><span style="left:1794px">Request Query</span></div>
<div class="pr" style="top:468px"><span class="r" style="left:30px;width:100px">104…</span><span style="left:150px">12.990290</span><span style="left:368px">127.0.0.1</span><span style="left:696px">127.0.0.1</span><span style="left:1023.7px">MySQL</span><span class="r" style="left:1150px;width:119px">78</span><span style="left:1289.7px">3306</span><span style="left:1513.7px">55507</span><span style="left:1794px">Response  OK Response  OK</span></div>
<div class="pr" style="top:504px"><span class="r" style="left:30px;width:100px">104…</span><span style="left:150px">12.990354</span><span style="left:368px">127.0.0.1</span><span style="left:696px">127.0.0.1</span><span style="left:1023.7px">MySQL</span><span class="r" style="left:1150px;width:119px">67</span><span style="left:1289.7px">3306</span><span style="left:1513.7px">55507</span><span style="left:1794px">Response  OK</span></div>
<div class="pr" style="top:540px"><span class="r" style="left:30px;width:100px">104…</span><span style="left:150px">12.990406</span><span style="left:368px">127.0.0.1</span><span style="left:696px">127.0.0.1</span><span style="left:1023.7px">MySQL</span><span class="r" style="left:1150px;width:119px">67</span><span style="left:1289.7px">3306</span><span style="left:1513.7px">55507</span><span style="left:1794px">Response  OK</span></div>
<div class="abs" style="left:16px;top:0;width:2px;height:578px;background:#6f7480"></div>
</div>
<div class="abs" style="left:0;top:1110px;width:3840px;height:17px;background:#cbcbcb;border-top:1px solid #a9a9a9;border-bottom:1px solid #8a8a8a"></div>
<div class="abs" style="left:1908px;top:1126px;width:17px;height:929px;background:#cbcbcb;border-left:1px solid #b0b0b0;border-right:1px solid #b0b0b0"></div>
<div class="abs" style="left:1909px;top:1111px;width:15px;height:16px;background:#cbcbcb"></div>
<div class="abs" style="left:1914px;top:1113px;width:12px;height:12px;border-radius:50%;background:#b2b2b2"></div>
<div class="abs" style="left:1911px;top:1585px;width:12px;height:12px;border-radius:50%;background:#b2b2b2"></div>
<div class="abs" style="left:0;top:1127px;width:2px;height:929px;background:#a4a4a4"></div>
<div class="abs" style="left:3838px;top:1127px;width:2px;height:929px;background:#b4b4b4"></div>
<div id="det">
<div class="dr" style="top:-9px"><span style="left:89.5px">[TCP Segment Len: 180]</span></div>
<div class="dr" style="top:27px"><span style="left:89.5px">Sequence Number: 1256    (relative sequence number)</span></div>
<div class="dr" style="top:63px"><span style="left:89.5px">Sequence Number (raw): 1817592441</span></div>
<div class="dr" style="top:99px"><span style="left:89.5px">[Next Sequence Number: 1436    (relative sequence number)]</span></div>
<div class="dr" style="top:135px"><span style="left:89.5px">Acknowledgment Number: 1248    (relative ack number)</span></div>
<div class="dr" style="top:171px"><span style="left:89.5px">Acknowledgment number (raw): 2395194688</span></div>
<div class="dr" style="top:207px"><span style="left:89.5px">1000 .... = Header Length: 32 bytes (8)</span></div>
<div class="dr" style="top:243px"><svg class="chev" style="left:56px;top:9px" width="12" height="18" viewBox="0 0 12 18"><path d="M2 2 L10 9 L2 16" stroke="#b0b0b0" stroke-width="3" fill="none" stroke-linecap="round" stroke-linejoin="round"/></svg><span style="left:89.5px">Flags: 0x018 (PSH, ACK)</span></div>
<div class="dr" style="top:279px"><span style="left:89.5px">Window: 6360</span></div>
<div class="dr" style="top:315px"><span style="left:89.5px">[Calculated window size: 407040]</span></div>
<div class="dr" style="top:351px"><span style="left:89.5px">[Window size scaling factor: 64]</span></div>
<div class="dr" style="top:387px"><span style="left:89.5px">Checksum: 0xfedc [unverified]</span></div>
<div class="dr" style="top:423px"><span style="left:89.5px">[Checksum Status: Unverified]</span></div>
<div class="dr" style="top:459px"><span style="left:89.5px">Urgent Pointer: 0</span></div>
<div class="dr" style="top:495px"><svg class="chev" style="left:56px;top:9px" width="12" height="18" viewBox="0 0 12 18"><path d="M2 2 L10 9 L2 16" stroke="#b0b0b0" stroke-width="3" fill="none" stroke-linecap="round" stroke-linejoin="round"/></svg><span style="left:89.5px">Options: (12 bytes), No-Operation (NOP), No-Operation (NOP), Timestamps</span></div>
<div class="dr" style="top:531px"><svg class="chev" style="left:56px;top:9px" width="12" height="18" viewBox="0 0 12 18"><path d="M2 2 L10 9 L2 16" stroke="#b0b0b0" stroke-width="3" fill="none" stroke-linecap="round" stroke-linejoin="round"/></svg><span style="left:89.5px">[Timestamps]</span></div>
<div class="dr" style="top:567px"><svg class="chev" style="left:56px;top:9px" width="12" height="18" viewBox="0 0 12 18"><path d="M2 2 L10 9 L2 16" stroke="#b0b0b0" stroke-width="3" fill="none" stroke-linecap="round" stroke-linejoin="round"/></svg><span style="left:89.5px">[SEQ/ACK analysis]</span></div>
<div class="dr" style="top:603px"><span style="left:89.5px">TCP payload (180 bytes)</span></div>
<div class="dr" style="top:639px"><span style="left:89.5px">[PDU Size: 180]</span></div>
<div class="dr" style="top:675px"><div class="abs" style="left:40px;top:0;width:1866px;height:36px;background:#e8e8e8"></div><svg class="chev" style="left:12px;top:12px" width="18" height="12" viewBox="0 0 18 12"><path d="M2 2 L9 10 L16 2" stroke="#b0b0b0" stroke-width="3" fill="none" stroke-linecap="round" stroke-linejoin="round"/></svg><span style="left:49.0px">MySQL Protocol</span></div>
<div class="dr" style="top:711px"><span style="left:89.5px">Packet Length: 176</span></div>
<div class="dr" style="top:747px"><span style="left:89.5px">Packet Number: 0</span></div>
<div class="dr" style="top:783px"><svg class="chev" style="left:52px;top:12px" width="18" height="12" viewBox="0 0 18 12"><path d="M2 2 L9 10 L16 2" stroke="#b0b0b0" stroke-width="3" fill="none" stroke-linecap="round" stroke-linejoin="round"/></svg><span style="left:89.5px">Request Command Query</span></div>
<div class="dr" style="top:819px"><span style="left:130.0px">Command: Query (3)</span></div>
<div class="dr" style="top:855px"><svg class="chev" style="left:97px;top:9px" width="12" height="18" viewBox="0 0 12 18"><path d="M2 2 L10 9 L2 16" stroke="#b0b0b0" stroke-width="3" fill="none" stroke-linecap="round" stroke-linejoin="round"/></svg><span style="left:130.0px">Query Attributes</span></div>
<div class="dr sel" style="top:891px"><span style="left:130.0px">Statement: DELETE FROM t<u>_</u>order<u>_</u>1 WHERE order<u>_</u>id = 1001;DELETE FROM t<u>_</u>order<u>_</u>1 WHERE order<u>_</u>id = 1101;DELETE FROM t<u>_</u>order<u>_</u>1 WHERE order<u>_</u>id = 999;DELETE FROM t<u>_</u>order<u>_</u>1 WHERE order<u>_</u>id = 998</span></div>
</div>
<div id="hex"><div id="hexoff"></div>
<div class="hl" style="left:829.0px;top:91px;width:32.0px;height:30px"></div>
<div class="hl" style="left:108.8px;top:121px;width:752.2px;height:300px"></div>
<div class="hl" style="left:108.8px;top:421px;width:563.4px;height:32px"></div>
<div class="hl" style="left:1157.1px;top:91px;width:15.8px;height:30px"></div>
<div class="hl" style="left:906.8px;top:121px;width:266.1px;height:300px"></div>
<div class="hl" style="left:906.8px;top:421px;width:203.2px;height:32px"></div>
<div class="hx" style="left:16.6px;top:1px;color:#9a9a9a"><span>0000</span></div>
<div class="hx" style="left:110.3px;top:1px"><span>02 00 00 00 45 00 00 e8  00 00 40 00 40 06 00 00</span></div>
<div class="hx" style="left:906.5px;top:1px"><span><i class="dot">·</i><i class="dot">·</i><i class="dot">·</i><i class="dot">·</i>E<i class="dot">·</i><i class="dot">·</i><i class="dot">·</i> <i class="dot">·</i><i class="dot">·</i>@<i class="dot">·</i>@<i class="dot">·</i><i class="dot">·</i><i class="dot">·</i></span></div>
<div class="hx" style="left:16.6px;top:31px;color:#9a9a9a"><span>0010</span></div>
<div class="hx" style="left:110.3px;top:31px"><span>7f 00 00 01 7f 00 00 01  d8 d3 0c ea 6c 56 42 79</span></div>
<div class="hx" style="left:906.5px;top:31px"><span><i class="dot">·</i><i class="dot">·</i><i class="dot">·</i><i class="dot">·</i><i class="dot">·</i><i class="dot">·</i><i class="dot">·</i><i class="dot">·</i> <i class="dot">·</i><i class="dot">·</i><i class="dot">·</i><i class="dot">·</i>lVBy</span></div>
<div class="hx" style="left:16.6px;top:61px;color:#9a9a9a"><span>0020</span></div>
<div class="hx" style="left:110.3px;top:61px"><span>8e c3 c5 40 80 18 18 d8  fe dc 00 00 01 01 08 0a</span></div>
<div class="hx" style="left:906.5px;top:61px"><span><i class="dot">·</i><i class="dot">·</i><i class="dot">·</i>@<i class="dot">·</i><i class="dot">·</i><i class="dot">·</i><i class="dot">·</i> <i class="dot">·</i><i class="dot">·</i><i class="dot">·</i><i class="dot">·</i><i class="dot">·</i><i class="dot">·</i><i class="dot">·</i><i class="dot">·</i></span></div>
<div class="hx" style="left:16.6px;top:91px;color:#3c3c3c"><span>0030</span></div>
<div class="hx" style="left:110.3px;top:91px"><span>f4 f9 80 05 7c a0 20 dc  b0 00 00 00 03 00 01 <b style="font-weight:normal;color:#0b1a2c">44</b></span></div>
<div class="hx" style="left:906.5px;top:91px"><span><i class="dot">·</i><i class="dot">·</i><i class="dot">·</i><i class="dot">·</i>|<i class="dot">·</i> <i class="dot">·</i> <i class="dot">·</i><i class="dot">·</i><i class="dot">·</i><i class="dot">·</i><i class="dot">·</i><i class="dot">·</i><i class="dot">·</i><b style="font-weight:normal;color:#0b1a2c">D</b></span></div>
<div class="hx" style="left:16.6px;top:121px;color:#3c3c3c"><span>0040</span></div>
<div class="hx" style="left:110.3px;top:121px;color:#0b1a2c"><span>45 4c 45 54 45 20 46 52  4f 4d 20 74 5f 6f 72 64</span></div>
<div class="hx" style="left:906.5px;top:121px;color:#0b1a2c"><span>ELETE FR OM t<u>_</u>ord</span></div>
<div class="hx" style="left:16.6px;top:151px;color:#3c3c3c"><span>0050</span></div>
<div class="hx" style="left:110.3px;top:151px;color:#0b1a2c"><span>65 72 5f 31 20 57 48 45  52 45 20 6f 72 64 65 72</span></div>
<div class="hx" style="left:906.5px;top:151px;color:#0b1a2c"><span>er<u>_</u>1 WHE RE order</span></div>
<div class="hx" style="left:16.6px;top:181px;color:#3c3c3c"><span>0060</span></div>
<div class="hx" style="left:110.3px;top:181px;color:#0b1a2c"><span>5f 69 64 20 3d 20 31 30  30 31 3b 44 45 4c 45 54</span></div>
<div class="hx" style="left:906.5px;top:181px;color:#0b1a2c"><span><u>_</u>id = 10 01;DELET</span></div>
<div class="hx" style="left:16.6px;top:211px;color:#3c3c3c"><span>0070</span></div>
<div class="hx" style="left:110.3px;top:211px;color:#0b1a2c"><span>45 20 46 52 4f 4d 20 74  5f 6f 72 64 65 72 5f 31</span></div>
<div class="hx" style="left:906.5px;top:211px;color:#0b1a2c"><span>E FROM t <u>_</u>order<u>_</u>1</span></div>
<div class="hx" style="left:16.6px;top:241px;color:#3c3c3c"><span>0080</span></div>
<div class="hx" style="left:110.3px;top:241px;color:#0b1a2c"><span>20 57 48 45 52 45 20 6f  72 64 65 72 5f 69 64 20</span></div>
<div class="hx" style="left:906.5px;top:241px;color:#0b1a2c"><span> WHERE o rder<u>_</u>id </span></div>
<div class="hx" style="left:16.6px;top:271px;color:#3c3c3c"><span>0090</span></div>
<div class="hx" style="left:110.3px;top:271px;color:#0b1a2c"><span>3d 20 31 31 30 31 3b 44  45 4c 45 54 45 20 46 52</span></div>
<div class="hx" style="left:906.5px;top:271px;color:#0b1a2c"><span>= 1101;D ELETE FR</span></div>
<div class="hx" style="left:16.6px;top:301px;color:#3c3c3c"><span>00a0</span></div>
<div class="hx" style="left:110.3px;top:301px;color:#0b1a2c"><span>4f 4d 20 74 5f 6f 72 64  65 72 5f 31 20 57 48 45</span></div>
<div class="hx" style="left:906.5px;top:301px;color:#0b1a2c"><span>OM t<u>_</u>ord er<u>_</u>1 WHE</span></div>
<div class="hx" style="left:16.6px;top:331px;color:#3c3c3c"><span>00b0</span></div>
<div class="hx" style="left:110.3px;top:331px;color:#0b1a2c"><span>52 45 20 6f 72 64 65 72  5f 69 64 20 3d 20 39 39</span></div>
<div class="hx" style="left:906.5px;top:331px;color:#0b1a2c"><span>RE order <u>_</u>id = 99</span></div>
<div class="hx" style="left:16.6px;top:361px;color:#3c3c3c"><span>00c0</span></div>
<div class="hx" style="left:110.3px;top:361px;color:#0b1a2c"><span>39 3b 44 45 4c 45 54 45  20 46 52 4f 4d 20 74 5f</span></div>
<div class="hx" style="left:906.5px;top:361px;color:#0b1a2c"><span>9;DELETE  FROM t<u>_</u></span></div>
<div class="hx" style="left:16.6px;top:391px;color:#3c3c3c"><span>00d0</span></div>
<div class="hx" style="left:110.3px;top:391px;color:#0b1a2c"><span>6f 72 64 65 72 5f 31 20  57 48 45 52 45 20 6f 72</span></div>
<div class="hx" style="left:906.5px;top:391px;color:#0b1a2c"><span>order<u>_</u>1  WHERE or</span></div>
<div class="hx" style="left:16.6px;top:421px;color:#3c3c3c"><span>00e0</span></div>
<div class="hx" style="left:110.3px;top:421px;color:#0b1a2c"><span>64 65 72 5f 69 64 20 3d  20 39 39 38</span></div>
<div class="hx" style="left:906.5px;top:421px;color:#0b1a2c"><span>der<u>_</u>id =  998</span></div>
<div class="abs" style="left:686.7px;top:181px;width:34.2px;height:30px;border:1px solid #7d8794"></div>
<div class="abs" style="left:1111.1px;top:181px;width:16.6px;height:30px;border:1px solid #7d8794"></div>
</div>
<div class="abs" style="left:0;top:2054px;width:3840px;height:3px;background:#e6e6e6"></div>
<div class="abs" style="left:0;top:2054px;width:3840px;height:1.3px;background:#c2c2c2"></div>
<div class="abs" style="left:2px;top:2054px;width:1906px;height:1.6px;background:#c3cee8"></div>
<div class="abs" style="left:0;top:2056px;width:3840px;height:1.2px;background:#6c6c6c"></div>
<div id="status">
<svg class="abs" style="left:0;top:-1px" width="130" height="54" viewBox="0 0 130 54"><defs><radialGradient id="gexp" cx="0.4" cy="0.3" r="0.8"><stop offset="0" stop-color="#e27a7c"/><stop offset="1" stop-color="#cf5558"/></radialGradient><linearGradient id="gband2" x1="0" y1="0" x2="1" y2="1"><stop offset="0" stop-color="#7fb8e0"/><stop offset="1" stop-color="#3f8fd0"/></linearGradient></defs><circle cx="33.9" cy="25.8" r="12.9" fill="url(#gexp)" stroke="#76302f" stroke-width="2"/><path d="M71.4 12.8 H88 L92.4 17.2 V39 H71.4 Z" fill="#ecece6" stroke="#9a9a9a" stroke-width="0.9"/><rect x="72" y="13.4" width="15.6" height="5.6" fill="url(#gband2)"/><path d="M81 13.4 C78 14.6,76.6 16.8,76.4 19 L81 19 C79.6 17.2,79.6 15,81 13.4 Z" fill="#f4f6f6"/><text x="81.6" y="25.6" font-family="Liberation Sans,sans-serif" font-size="4.8" text-anchor="middle" fill="#a8a8a4">01010</text><text x="81.6" y="30.8" font-family="Liberation Sans,sans-serif" font-size="4.8" text-anchor="middle" fill="#a8a8a4">01101</text><text x="81.6" y="36.0" font-family="Liberation Sans,sans-serif" font-size="4.8" text-anchor="middle" fill="#a8a8a4">01110</text><path d="M94.2 13.2 L97.2 16 L84.2 30.4 L81.2 27.6 Z" fill="#3c3c3c"/><path d="M95 12.4 L96.6 11 Q97.6 10.4 98.6 11.4 L99.4 12.4 Q100 13.4 99.2 14.2 L97.9 15.3 Z" fill="#3c3c3c"/><path d="M80.6 28.4 L83.6 31.2 L78 33.6 Z" fill="#111"/></svg>
<div class="st" style="left:138px">Bytes 63-235: Statement (mysql.query)</div>
<div class="abs" style="left:2567px;top:21px;width:12px;height:12px;border-radius:50%;background:#b4b4b4"></div>
<div class="st" style="left:2602.3px;letter-spacing:0.66px">Packets: 37890 · Displayed: 16 (0.0%)</div>
<div class="abs" style="left:3639px;top:21px;width:12px;height:12px;border-radius:50%;background:#b4b4b4"></div>
<div class="st" style="left:3674.4px;letter-spacing:0.55px">Profile: Default</div>
</div>
<div class="ann" style="left:1781px;top:637.5px;width:237px;height:53.5px"></div>
<div class="ann" style="left:114px;top:2010px;width:1801.5px;height:54.6px"></div>
</div></body></html>
